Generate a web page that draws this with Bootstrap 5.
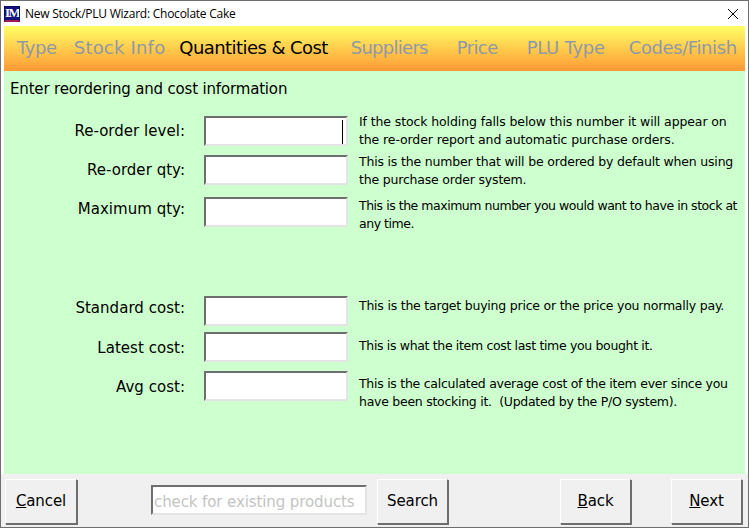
<!DOCTYPE html>
<html lang="en"><head><meta charset="utf-8"><title>New Stock/PLU Wizard</title>
<link href="https://cdn.jsdelivr.net/npm/bootstrap@5.3.0/dist/css/bootstrap.min.css" rel="stylesheet">
<style>
html,body{margin:0;height:528px;overflow:hidden;background:#fff}
.win{width:749px;height:528px;border:1px solid #6e6e6e;background:#fff;font-family:"DejaVu Sans",sans-serif;color:#000}
.ttl{height:25px;padding-left:3px;font:12px "Open Sans",sans-serif;letter-spacing:-.24px}
.logo{width:16px;height:16px;background:#14127c;border:1px solid #0a0a60;color:#fff;font:bold 13px/12px "Liberation Serif",serif;text-align:center;overflow:hidden;border-bottom:2px solid #a01a50;letter-spacing:-1.5px;margin-right:5px}
.cls{width:12px;height:12px;margin-right:9px}
.stage{margin:0 3px;flex:1 1 auto;min-height:0;display:flex;flex-direction:column}
.tabs{height:45px;background:linear-gradient(#ffff66,#ff9933);padding:0 0 3px 13px;font-size:18px;letter-spacing:-.4px;color:#8f98a8;white-space:nowrap}
.tabs .cur{color:#000;letter-spacing:-.57px}
.t-stock{margin-left:17px;letter-spacing:.2px}.t-cur{margin-left:14px}.t-sup{margin-left:23px;letter-spacing:-.73px}.t-pri{margin-left:29px;letter-spacing:-.6px}.t-plu{margin-left:29px;letter-spacing:-.27px}.t-cod{margin-left:24px}
.pane{flex:1 1 auto;background:#ceffce;padding:8px 0 0 6px}
.intro{font-size:15px;letter-spacing:-.17px;line-height:20px;margin-bottom:17px}
.frow{height:30px;margin-bottom:9px}
.frow.m12{margin-bottom:12px}
.frow.m6{margin-bottom:6px}
.frow.gap1{margin-top:69px}
.lbl{width:175px;text-align:right;font-size:15px;letter-spacing:.03px;margin-right:19px;flex:none}
.lup{margin-bottom:5px}.ldn{margin-top:2px}
.inp{width:144px;height:30px;flex:none;background:#fff;border:2px solid;border-color:#6e6e6e #e4e4e4 #e4e4e4 #6e6e6e;position:relative}
.caret{position:absolute;right:3px;top:2px;width:1px;height:24px;background:#000}
.hlp{margin-left:11px;font-size:12.5px;line-height:18px;letter-spacing:-.22px;white-space:nowrap}
.h1x{letter-spacing:-.11px}.h2x{margin-top:2px;letter-spacing:-.19px}.h3x{margin-top:6px;letter-spacing:-.47px}.h4x{margin-bottom:10px}.h5x{margin-bottom:2px;letter-spacing:-.34px}.h6x{margin-top:14px;letter-spacing:-.27px}
.foot{height:53px;margin:0 -3px;background:#f0f0f0;padding:5px 0 0 4px}
.wbtn{height:45px;border:1px solid;border-color:#fff #6e6e6e #6e6e6e #fff;box-shadow:1px 1px 0 #6e6e6e;background:#f0f0f0;border-radius:0;font-size:15px;letter-spacing:-.1px;padding:0;color:#000;font-family:inherit}
.w1{width:72px}.w2{width:71px}
.srch{width:216px;height:30px;margin:6px 0 0 74px;border:2px solid;border-color:#6e6e6e #e4e4e4 #e4e4e4 #6e6e6e;background:#fff;color:#c4c4c4;font-size:15px;padding:2px 0 0 1px;line-height:26px;letter-spacing:-.1px;white-space:nowrap;overflow:hidden}
.b1{margin-left:10px}.b2{margin-left:112px}.b3{margin-left:40px}
</style></head><body>
<div class="win d-flex flex-column">
 <div class="ttl d-flex align-items-center flex-none">
  <div class="logo">IM</div><span>New Stock/PLU Wizard: Chocolate Cake</span>
  <svg class="cls ms-auto" viewBox="0 0 12 12"><path d="M1 1L11 11M11 1L1 11" stroke="#000" stroke-width="1" fill="none"/></svg>
 </div>
 <div class="stage">
  <div class="tabs d-flex align-items-center">
   <span>Type</span><span class="t-stock">Stock Info</span><span class="cur t-cur">Quantities &amp; Cost</span><span class="t-sup">Suppliers</span><span class="t-pri">Price</span><span class="t-plu">PLU Type</span><span class="t-cod">Codes/Finish</span>
  </div>
  <div class="pane">
   <div class="intro">Enter reordering and cost information</div>
   <div class="frow d-flex align-items-center"><div class="lbl">Re-order level:</div><div class="inp"><i class="caret"></i></div><div class="hlp h1x">If the stock holding falls below this number it will appear on<br>the re-order report and automatic purchase orders.</div></div>
   <div class="frow m12 d-flex align-items-center"><div class="lbl">Re-order qty:</div><div class="inp"></div><div class="hlp h2x">This is the number that will be ordered by default when using<br>the purchase order system.</div></div>
   <div class="frow d-flex align-items-center"><div class="lbl lup">Maximum qty:</div><div class="inp"></div><div class="hlp h3x">This is the maximum number you would want to have in stock at<br>any time.</div></div>
   <div class="frow m6 gap1 d-flex align-items-center"><div class="lbl lup">Standard cost:</div><div class="inp"></div><div class="hlp h4x">This is the target buying price or the price you normally pay.</div></div>
   <div class="frow d-flex align-items-center"><div class="lbl ldn">Latest cost:</div><div class="inp"></div><div class="hlp h5x">This is what the item cost last time you bought it.</div></div>
   <div class="frow d-flex align-items-center"><div class="lbl ldn">Avg cost:</div><div class="inp"></div><div class="hlp h6x">This is the calculated average cost of the item ever since you<br>have been stocking it.&nbsp; (Updated by the P/O system).</div></div>
  </div>
  <div class="foot d-flex align-items-start">
   <button class="wbtn w1" type="button"><u>C</u>ancel</button>
   <div class="srch">check for existing products</div>
   <button class="wbtn w2 b1" type="button">Search</button>
   <button class="wbtn w2 b2" type="button"><u>B</u>ack</button>
   <button class="wbtn w2 b3" type="button"><u>N</u>ext</button>
  </div>
 </div>
</div>
</body></html>
